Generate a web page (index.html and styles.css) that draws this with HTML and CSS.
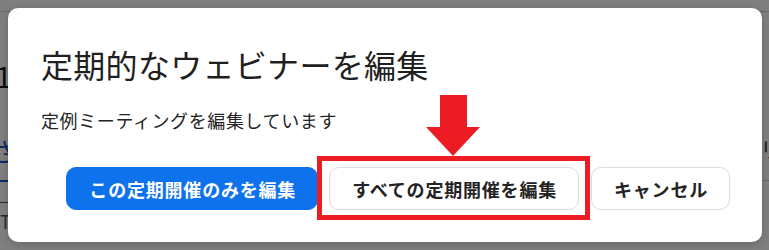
FILE: index.html
```html
<!DOCTYPE html>
<html lang="ja">

<head>
  <meta charset="UTF-8" />
  <meta name="viewport" content="width=device-width, initial-scale=1" />
  <title>定期的なウェビナーを編集</title>
  <link rel="stylesheet" href="styles.css">
</head>

<body>
  <!-- page behind the modal, mostly hidden -->
  <div class="page">
    <div class="page-topbar"></div>
    <p class="page-number">1</p>
    <p class="page-link">さ</p>
    <div class="page-divider"></div>
    <p class="page-label">T</p>
    <p class="page-right">リ</p>
    <div class="page-right-line"></div>
  </div>

  <div class="overlay">
    <div class="dialog">
      <h1 class="dialog-title">定期的なウェビナーを編集</h1>
      <p class="dialog-text">定例ミーティングを編集しています</p>

      <div class="dialog-buttons">
        <button class="dialog-button primary-button">この定期開催のみを編集</button>

        <span class="marked">
          <button class="dialog-button secondary-button">すべての定期開催を編集</button>
          <span class="mark-box"></span>
          <svg class="mark-arrow" width="54" height="61" viewBox="0 0 54 61">
            <polygon points="14,0 41,0 41,32 54,32 27,61 0,32 14,32" fill="#ed1c24" />
          </svg>
        </span>

        <button class="dialog-button secondary-button">キャンセル</button>
      </div>
    </div>
  </div>
</body>

</html>
```

FILE: styles.css
```css
* {
  box-sizing: border-box;
}

body {
  margin: 0;
  width: 769px;
  height: 250px;
  overflow: hidden;
  position: relative;
  font-family: 'Noto Sans CJK JP', 'Noto Sans', sans-serif;
  background: #ffffff;
  color: #222222;
}

/* background page */
.page {
  height: 250px;
  position: relative;
}

.page p {
  margin: 0;
  position: absolute;
}

.page-topbar {
  height: 12px;
  border-bottom: 1px solid #d4d4d4;
}

.page-number {
  left: -4px;
  top: 56px;
  font-size: 28px;
  color: #111111;
}

.page-link {
  left: -10px;
  top: 132px;
  font-size: 26px;
  color: #1557c0;
}

.page-divider {
  position: absolute;
  left: 0;
  top: 180px;
  width: 20px;
  border-top: 2px solid #1557c0;
}

.page-label {
  left: 0;
  top: 202px;
  font-size: 18px;
  color: #555555;
  border-top: 1px solid #555555;
  padding-top: 5px;
  width: 20px;
}

.page-right {
  left: 760px;
  top: 132px;
  font-size: 22px;
  color: #444444;
}

.page-right-line {
  position: absolute;
  left: 740px;
  top: 180px;
  width: 40px;
  border-top: 1px solid #cccccc;
}

/* modal */
.overlay {
  position: absolute;
  inset: 0;
  background: rgba(0, 0, 0, 0.5);
  padding: 8px 7px 8px 8px;
}

.dialog {
  background: #ffffff;
  border-radius: 10px;
  box-shadow: 0 2px 8px rgba(0, 0, 0, 0.2);
  height: 234px;
  padding: 36px 32px 32px 33px;
}

.dialog-title {
  margin: 0;
  font-size: 32px;
  font-weight: 400;
  letter-spacing: 0.3px;
  line-height: 40px;
  color: #1f1f1f;
}

.dialog-text {
  margin: 23px 0 0;
  font-size: 18px;
  letter-spacing: 0.6px;
  line-height: 26px;
  color: #232323;
}

.dialog-buttons {
  margin-top: 34px;
  display: flex;
  justify-content: flex-end;
  gap: 11px;
}

.dialog-button {
  height: 43px;
  padding: 0 21px 0 22px;
  border-radius: 10px;
  font-family: inherit;
  font-size: 18px;
  font-weight: 700;
  letter-spacing: 0.8px;
  cursor: pointer;
}

.primary-button {
  background: #0e72ed;
  border: 1px solid #0e72ed;
  color: #ffffff;
}

.secondary-button {
  background: #ffffff;
  border: 1px solid #dcdcdc;
  color: #232323;
}

/* red annotation */
.marked {
  position: relative;
  display: flex;
  margin-right: 1px;
}

.mark-box {
  position: absolute;
  top: -11px;
  left: -12px;
  right: -11px;
  bottom: -10px;
  border: 5px solid #ed1c24;
}

.mark-arrow {
  position: absolute;
  left: 97px;
  top: -72px;
}
```
